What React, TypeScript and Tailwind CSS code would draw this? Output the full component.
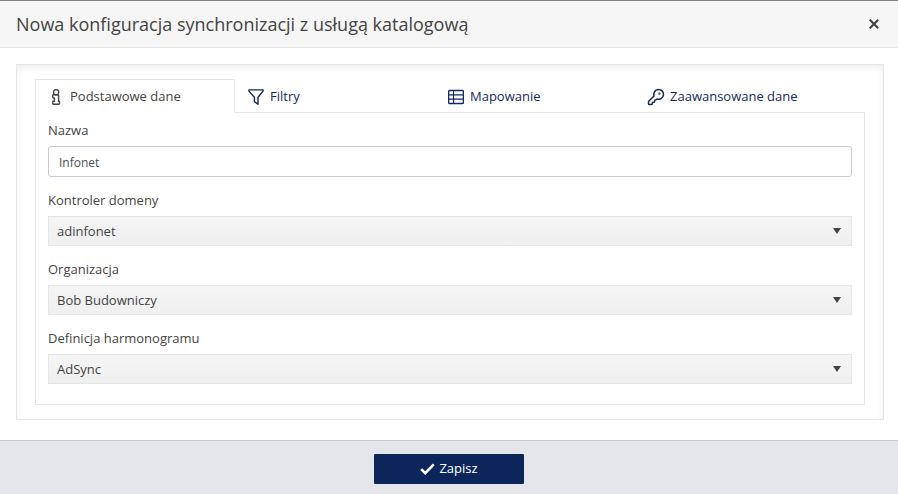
import { useState } from "react";
import type { ReactNode } from "react";
import { KeyRound } from "lucide-react";

function InfoIcon() {
  return (
    <svg aria-hidden="true" viewBox="0 0 16 16" className="size-4" fill="none" stroke="currentColor" strokeWidth="1.4" strokeLinejoin="round">
      <rect x="5.6" y="0.8" width="5" height="5" rx="2" />
      <path d="M4.7 6.6c0-.5.3-.8.8-.8h4.2c.5 0 .9.4.9.9v5.5h.2c.4 0 .7.3.7.7v1.6c0 .4-.3.7-.7.7H5.4c-.4 0-.7-.3-.7-.7v-1.6c0-.4.3-.7.7-.7h1V8.9h-1c-.4 0-.7-.3-.7-.7z" />
    </svg>
  );
}

function FilterIcon() {
  return (
    <svg aria-hidden="true" viewBox="0 0 16 16" className="size-4" fill="none" stroke="currentColor" strokeWidth="1.4" strokeLinejoin="round">
      <path d="M0.9 0.9h14.2v1.2L10 8.2v7.1L6.4 12.6V8.2L0.9 2.1z" />
    </svg>
  );
}

function TableIcon() {
  return (
    <svg aria-hidden="true" viewBox="0 0 16 16" className="size-4" fill="none" stroke="currentColor" strokeWidth="1.2">
      <rect x="0.6" y="1.5" width="14.8" height="13" rx="1" strokeWidth="1.4" />
      <path d="M5.5 1.5v13M0.6 5.8h14.8M0.6 10.2h14.8" />
    </svg>
  );
}

const tabs: { id: string; label: string; icon: ReactNode }[] = [
  { id: "basic", label: "Podstawowe dane", icon: <InfoIcon /> },
  { id: "filters", label: "Filtry", icon: <FilterIcon /> },
  { id: "mapping", label: "Mapowanie", icon: <TableIcon /> },
  { id: "advanced", label: "Zaawansowane dane", icon: <KeyRound aria-hidden="true" className="size-[18px] -m-px" strokeWidth={2} /> },
];

function SelectField({ id, label, value }: { id: string; label: string; value: string }) {
  return (
    <div className="flex flex-col gap-1.5">
      <label htmlFor={id} className="leading-5">{label}</label>
      <div className="relative">
        <select
          id={id}
          defaultValue={value}
          className="block h-[30px] w-full appearance-none border border-[#e6e6e6] bg-linear-to-b from-[#f5f5f5] to-[#efefef] px-2 pt-0.5 text-[#444]"
        >
          <option>{value}</option>
        </select>
        <svg aria-hidden="true" viewBox="0 0 8 6" className="pointer-events-none absolute top-3 right-[11px] h-1.5 w-2 fill-[#444]">
          <path d="M0 0h8L4 6z" />
        </svg>
      </div>
    </div>
  );
}

export default function App() {
  const [active, setActive] = useState("basic");

  return (
    <div className="flex min-h-screen flex-col border-t border-[#7f7f7f] bg-white font-['Open_Sans','Noto_Sans',sans-serif] text-[13px] text-[#444]">
      <header className="flex h-[47px] shrink-0 items-center justify-between border-b border-[#e6e6e6] bg-[#f5f5f5] pr-3.5 pl-4">
        <h1 className="text-lg">Nowa konfiguracja synchronizacji z usługą katalogową</h1>
        <button type="button" aria-label="Zamknij" className="flex size-5 items-center justify-center">
          <svg aria-hidden="true" viewBox="0 0 10 10" className="size-2.5" stroke="currentColor" strokeWidth="2.2">
            <path d="M0.8 0.8l8.4 8.4M9.2 0.8L0.8 9.2" />
          </svg>
        </button>
      </header>

      <main className="grow pt-4 pr-3.5 pb-5 pl-4">
        <div className="border border-[#e6e6e6] px-[18px] pt-3.5 pb-3.5 shadow-[inset_0_3px_6px_rgba(0,0,0,0.07)]">
          <div role="tablist" className="flex">
            {tabs.map((tab) => (
              <button
                key={tab.id}
                id={`tab-${tab.id}`}
                type="button"
                role="tab"
                aria-selected={tab.id === active}
                onClick={() => setActive(tab.id)}
                className={
                  tab.id === active
                    ? "relative -mb-px flex h-[34px] w-[200px] items-center gap-1.5 border border-b-0 border-[#e6e6e6] bg-white px-3"
                    : "flex h-[33px] w-[200px] items-center gap-1.5 px-[13px] pt-0.5 text-[#14295f]"
                }
              >
                {tab.icon}
                {tab.label}
              </button>
            ))}
          </div>

          <form
            id="sync-form"
            role="tabpanel"
            aria-labelledby={`tab-${active}`}
            className="flex flex-col gap-[13px] border border-[#e6e6e6] px-3 pt-[7px] pb-5"
            onSubmit={(e) => e.preventDefault()}
          >
            <div className="flex flex-col gap-1.5">
              <label htmlFor="name" className="leading-5">Nazwa</label>
              <input
                id="name"
                type="text"
                defaultValue="Infonet"
                className="h-[31px] w-full rounded-[3px] border border-[#c9ccd8] bg-white px-2.5 pt-0.5 text-xs text-[#495057]"
              />
            </div>
            <SelectField id="domain" label="Kontroler domeny" value="adinfonet" />
            <SelectField id="organization" label="Organizacja" value="Bob Budowniczy" />
            <SelectField id="schedule" label="Definicja harmonogramu" value="AdSync" />
          </form>
        </div>
      </main>

      <footer className="flex justify-center border-t border-[#c8cacc] bg-[#e3e6eb] pt-[13px] pb-2.5">
        <button
          type="submit"
          form="sync-form"
          className="flex h-[30px] w-[150px] items-center justify-center gap-1 rounded-[1px] bg-[#0c265c] text-white"
        >
          <svg aria-hidden="true" viewBox="0 0 15 12" className="h-3 w-[15px]" fill="none" stroke="currentColor" strokeWidth="2.6">
            <path d="M1.2 6.2l4 4L13.8 1.4" />
          </svg>
          Zapisz
        </button>
      </footer>
    </div>
  );
}
